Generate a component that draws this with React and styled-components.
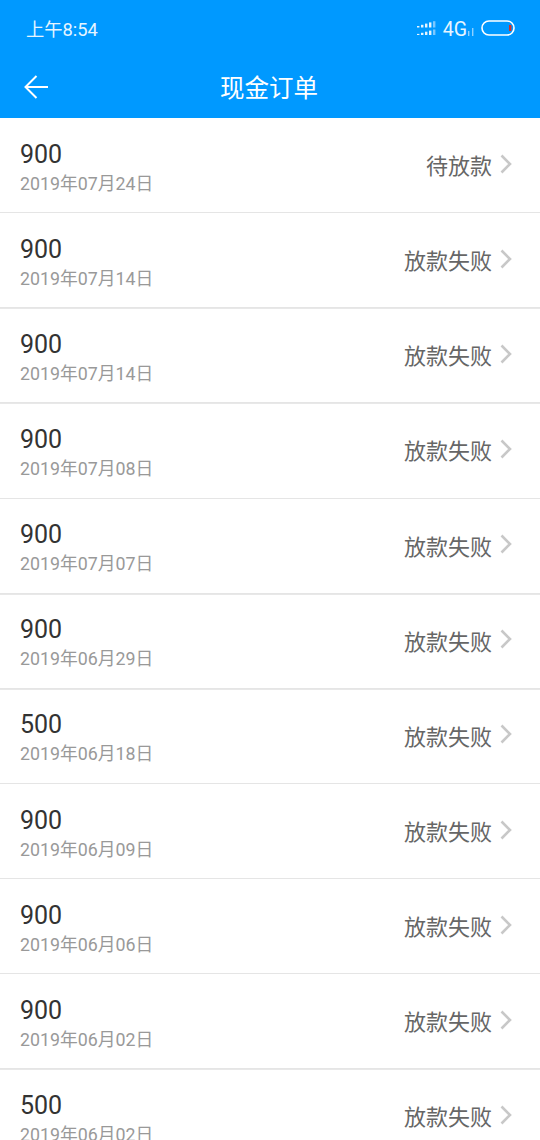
import React from 'react';
import styled, { createGlobalStyle } from 'styled-components';

const GlobalStyle = createGlobalStyle`
  html, body {
    margin: 0;
    padding: 0;
    background: #fff;
    overflow: hidden;
  }
  body {
    font-family: Roboto, "Noto Sans CJK SC", sans-serif;
  }
`;

const Page = styled.div`
  width: 540px;
  height: 1140px;
  overflow: hidden;
  background: #fff;
`;

const Header = styled.header`
  height: 118px;
  background: #0099ff;
  color: #fff;
  display: flex;
  flex-direction: column;
`;

const StatusBar = styled.div`
  height: 59px;
  padding: 0 25px 4px 26px;
  box-sizing: border-box;
  display: flex;
  align-items: center;
  justify-content: space-between;
`;

const Clock = styled.span`
  font-size: 18.3px;
  color: #e6f5ff;
`;

const StatusIcons = styled.div`
  display: flex;
  align-items: center;
`;

const Network = styled.span`
  font-size: 19.5px;
  margin: 3px 1px 0 5px;
  color: #e6f5ff;
`;

const TitleBar = styled.div`
  position: relative;
  height: 59px;
  display: flex;
  align-items: center;
  justify-content: center;
`;

const BackButton = styled.div`
  position: absolute;
  left: 24px;
  top: 16px;
  width: 24px;
  height: 24px;
`;

const Title = styled.h1`
  margin: 0 2px 5px 0;
  font-size: 24.5px;
  font-weight: 400;
  color: #fff;
`;

const List = styled.ul`
  list-style: none;
  margin: 0;
  padding: 0;
`;

const Row = styled.li`
  box-sizing: border-box;
  height: 95.15px;
  padding: 0 28px 0 20px;
  display: flex;
  align-items: center;
  justify-content: space-between;
  border-bottom: 1px solid #e5e5e5;
  box-shadow: ${(p) => (p.$thick ? '0 1px 0 #e8e8e8' : 'none')};
`;

const Info = styled.div`
  display: flex;
  flex-direction: column;
  padding-top: 5px;
`;

const Amount = styled.span`
  font-size: 25px;
  line-height: 30px;
  color: #333;
`;

const DateText = styled.span`
  font-size: 17.8px;
  line-height: 25px;
  margin-top: 1px;
  color: #999;
`;

const StatusCell = styled.div`
  display: flex;
  align-items: center;
  margin-top: -2px;
`;

const StatusText = styled.span`
  font-size: 22px;
  color: #666;
`;

const Chevron = styled.svg`
  width: 12px;
  height: 20px;
  margin-left: 8px;
  margin-top: -1px;
`;

const orders = [
  { amount: '900', date: '2019年07月24日', status: '待放款' },
  { amount: '900', date: '2019年07月14日', status: '放款失败', thick: true },
  { amount: '900', date: '2019年07月14日', status: '放款失败', thick: true },
  { amount: '900', date: '2019年07月08日', status: '放款失败' },
  { amount: '900', date: '2019年07月07日', status: '放款失败', thick: true },
  { amount: '900', date: '2019年06月29日', status: '放款失败', thick: true },
  { amount: '500', date: '2019年06月18日', status: '放款失败' },
  { amount: '900', date: '2019年06月09日', status: '放款失败' },
  { amount: '900', date: '2019年06月06日', status: '放款失败' },
  { amount: '900', date: '2019年06月02日', status: '放款失败', thick: true },
  { amount: '500', date: '2019年06月02日', status: '放款失败' },
];

const SignalIcon = () => (
  <svg width="21" height="16" viewBox="0 0 21 16">
    {[0, 4, 8, 12, 16].map((x, i) => (
      <g key={x} fill={i === 4 ? '#7cc8ff' : '#e6f5ff'}>
        <rect x={x} y={6 - i * 1.2} width="2.4" height={1.5 + i * 1.2} />
        <rect x={x} y={15 - (i + 1) * 1.1} width="2.4" height={(i + 1) * 1.1} />
      </g>
    ))}
  </svg>
);

const DataBars = () => (
  <svg width="8" height="8" viewBox="0 0 8 8" style={{ marginTop: 8 }}>
    <rect x="0" y="3" width="1.4" height="5" fill="#8fd0ff" />
    <rect x="4" y="0" width="1.4" height="8" fill="#8fd0ff" />
  </svg>
);

const BatteryIcon = () => (
  <svg width="34" height="16" viewBox="0 0 34 16" style={{ marginLeft: 5 }}>
    <rect x="1" y="1" width="32" height="14" rx="7" fill="none" stroke="#fff" strokeWidth="1.6" />
    <rect x="28" y="5" width="2.4" height="6" fill="#d0312d" />
  </svg>
);

export default function App() {
  return (
    <Page>
      <GlobalStyle />
      <Header>
        <StatusBar>
          <Clock>上午8:54</Clock>
          <StatusIcons>
            <SignalIcon />
            <Network>4G</Network>
            <DataBars />
            <BatteryIcon />
          </StatusIcons>
        </StatusBar>
        <TitleBar>
          <BackButton>
            <svg width="24" height="24" viewBox="0 0 24 24" fill="none" stroke="#fff" strokeWidth="2">
              <path d="M1 12h23M12.5 1 1.5 12l11 11" />
            </svg>
          </BackButton>
          <Title>现金订单</Title>
        </TitleBar>
      </Header>
      <List>
        {orders.map((order, i) => (
          <Row key={i} $thick={order.thick}>
            <Info>
              <Amount>{order.amount}</Amount>
              <DateText>{order.date}</DateText>
            </Info>
            <StatusCell>
              <StatusText>{order.status}</StatusText>
              <Chevron viewBox="0 0 12 20" fill="none" stroke="#c8c8c8" strokeWidth="2.6">
                <path d="M1.5 1.5 10 10l-8.500 8.500" />
              </Chevron>
            </StatusCell>
          </Row>
        ))}
      </List>
    </Page>
  );
}
